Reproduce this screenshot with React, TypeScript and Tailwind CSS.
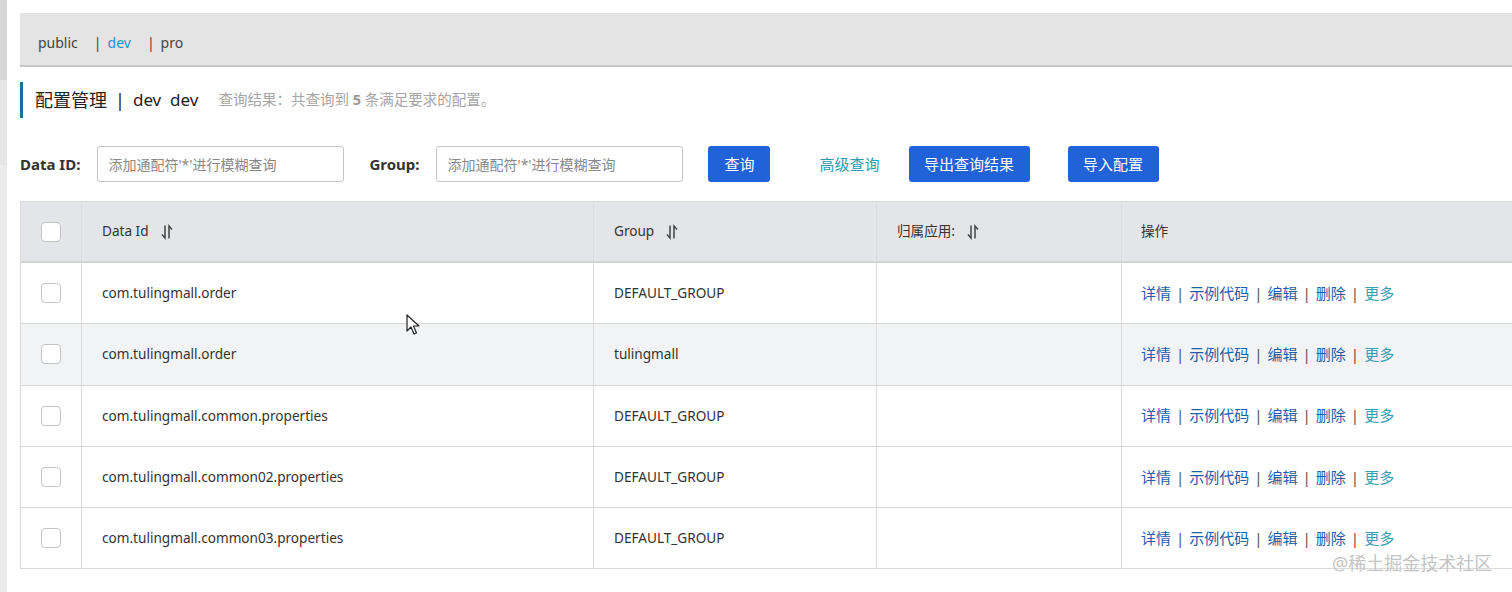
import type { ReactNode } from "react";

const font = { fontFamily: '"Noto Sans", "Noto Sans CJK SC", sans-serif' };

const rows = [
  { dataId: "com.tulingmall.order", group: "DEFAULT_GROUP" },
  { dataId: "com.tulingmall.order", group: "tulingmall", hover: true },
  { dataId: "com.tulingmall.common.properties", group: "DEFAULT_GROUP" },
  { dataId: "com.tulingmall.common02.properties", group: "DEFAULT_GROUP" },
  { dataId: "com.tulingmall.common03.properties", group: "DEFAULT_GROUP" },
];

function SortIcon() {
  return (
    <svg width="14" height="16" viewBox="0 0 14 16" className="ml-[11px]" fill="none" stroke="#444" strokeWidth="1.5">
      <path d="M5 1.5v12.5L2 10.5" />
      <path d="M9 14.5V2l3 3.5" />
    </svg>
  );
}

function Checkbox() {
  return <div className="h-[20px] w-[20px] rounded-[4px] border border-[#c4c4c4] bg-white" />;
}

function Cell({ w, children, last }: { w: string; children?: ReactNode; last?: boolean }) {
  return (
    <div className={`flex h-full shrink-0 items-center ${w} ${last ? "" : "border-r border-[#dcdcdc]"}`}>
      {children}
    </div>
  );
}

function Actions() {
  const sep = <span className="mx-[5px] text-[#555]">|</span>;
  return (
    <div className="flex items-center pl-[19px] text-[15px] text-[#1d5ea8]">
      <span>详情</span>
      {sep}
      <span>示例代码</span>
      {sep}
      <span>编辑</span>
      {sep}
      <span>删除</span>
      {sep}
      <span className="text-[#3a9fb3]">更多</span>
    </div>
  );
}

function App() {
  return (
    <div className="relative flex h-[592px] w-[1512px] overflow-hidden bg-white text-[#333]" style={font}>
      <div className="flex w-[7px] shrink-0 flex-col">
        <div className="h-[80px] bg-[#d6d6d6]" />
        <div className="h-[85px] bg-[#e6e6e6]" />
        <div className="flex-1 bg-[#ececec]" />
      </div>

      <div className="flex min-w-0 flex-1 flex-col pl-[13px] pt-[13px]">
        <div className="flex h-[54px] items-center border-b-2 border-[#c8c8c8] bg-[#e4e4e4] pl-[18px] pt-[6px] text-[14px] text-[#444]">
          <span>public</span>
          <span className="ml-[16px]">|</span>
          <span className="ml-[6px] text-[#2a8dc0]">dev</span>
          <span className="ml-[16px]">|</span>
          <span className="ml-[6px]">pro</span>
        </div>

        <div className="mt-[15px] flex h-[36px] items-center border-l-[3px] border-[#1f6aa5] pl-[12px]">
          <span className="text-[18px] text-[#222]">配置管理</span>
          <span className="ml-[8px] text-[18px] text-[#222]">|</span>
          <span className="ml-[8px] text-[17px] text-[#222]">dev&nbsp;&nbsp;dev</span>
          <span className="ml-[20px] text-[14.5px] text-[#a6a6a6]">
            查询结果：共查询到 <b className="font-bold text-[#999]">5</b> 条满足要求的配置。
          </span>
        </div>

        <div className="mt-[28px] flex h-[36px] items-center">
          <span className="text-[15px] font-bold text-[#333]">Data ID:</span>
          <div className="ml-[17px] flex h-[36px] w-[247px] items-center rounded-[3px] border border-[#c4c4c4] px-[10px] text-[14px] text-[#888]">
            添加通配符'*'进行模糊查询
          </div>
          <span className="ml-[25px] text-[15px] font-bold text-[#333]">Group:</span>
          <div className="ml-[17px] flex h-[36px] w-[247px] items-center rounded-[3px] border border-[#c4c4c4] px-[10px] text-[14px] text-[#888]">
            添加通配符'*'进行模糊查询
          </div>
          <button className="ml-[25px] h-[36px] w-[62px] rounded-[3px] bg-[#2162d8] text-[15px] text-white">查询</button>
          <span className="ml-[49px] text-[15px] text-[#2b9bb0]">高级查询</span>
          <button className="ml-[29px] h-[36px] w-[121px] rounded-[3px] bg-[#2162d8] text-[15px] text-white">导出查询结果</button>
          <button className="ml-[38px] h-[36px] w-[91px] rounded-[3px] bg-[#2162d8] text-[15px] text-white">导入配置</button>
        </div>

        <div className="mt-[19px] w-[1540px] border-l border-t border-[#d9d9d9] text-[13.6px]">
          <div className="flex h-[61px] border-b-2 border-[#d4d4d4] bg-[#e4e5e8] text-[#333]">
            <Cell w="w-[61px] justify-center">
              <Checkbox />
            </Cell>
            <Cell w="w-[512px] pl-[20px]">
              Data Id
              <SortIcon />
            </Cell>
            <Cell w="w-[283px] pl-[20px]">
              Group
              <SortIcon />
            </Cell>
            <Cell w="w-[245px] pl-[20px]">
              归属应用:
              <SortIcon />
            </Cell>
            <Cell w="flex-1 pl-[19px]" last>
              操作
            </Cell>
          </div>
          {rows.map((r, i) => (
            <div
              key={i}
              className={`flex h-[61.3px] border-b border-[#d9d9d9] ${r.hover ? "bg-[#f2f3f5]" : "bg-white"}`}
            >
              <Cell w="w-[61px] justify-center">
                <Checkbox />
              </Cell>
              <Cell w="w-[512px] pl-[20px]">{r.dataId}</Cell>
              <Cell w="w-[283px] pl-[20px]">{r.group}</Cell>
              <Cell w="w-[245px]" />
              <Cell w="flex-1" last>
                <Actions />
              </Cell>
            </div>
          ))}
        </div>
      </div>

      <svg className="absolute left-[406px] top-[314px]" width="14" height="22" viewBox="0 0 14 22">
        <path d="M1 1v16l4-4 3 7 2.5-1-3-7h5.5z" fill="white" stroke="#222" strokeWidth="1.2" strokeLinejoin="round" />
      </svg>

      <div className="absolute left-[1332px] top-[551px] text-[18px] leading-[24px] text-[#c4c4c4]">@稀土掘金技术社区</div>
    </div>
  );
}

export default App;
